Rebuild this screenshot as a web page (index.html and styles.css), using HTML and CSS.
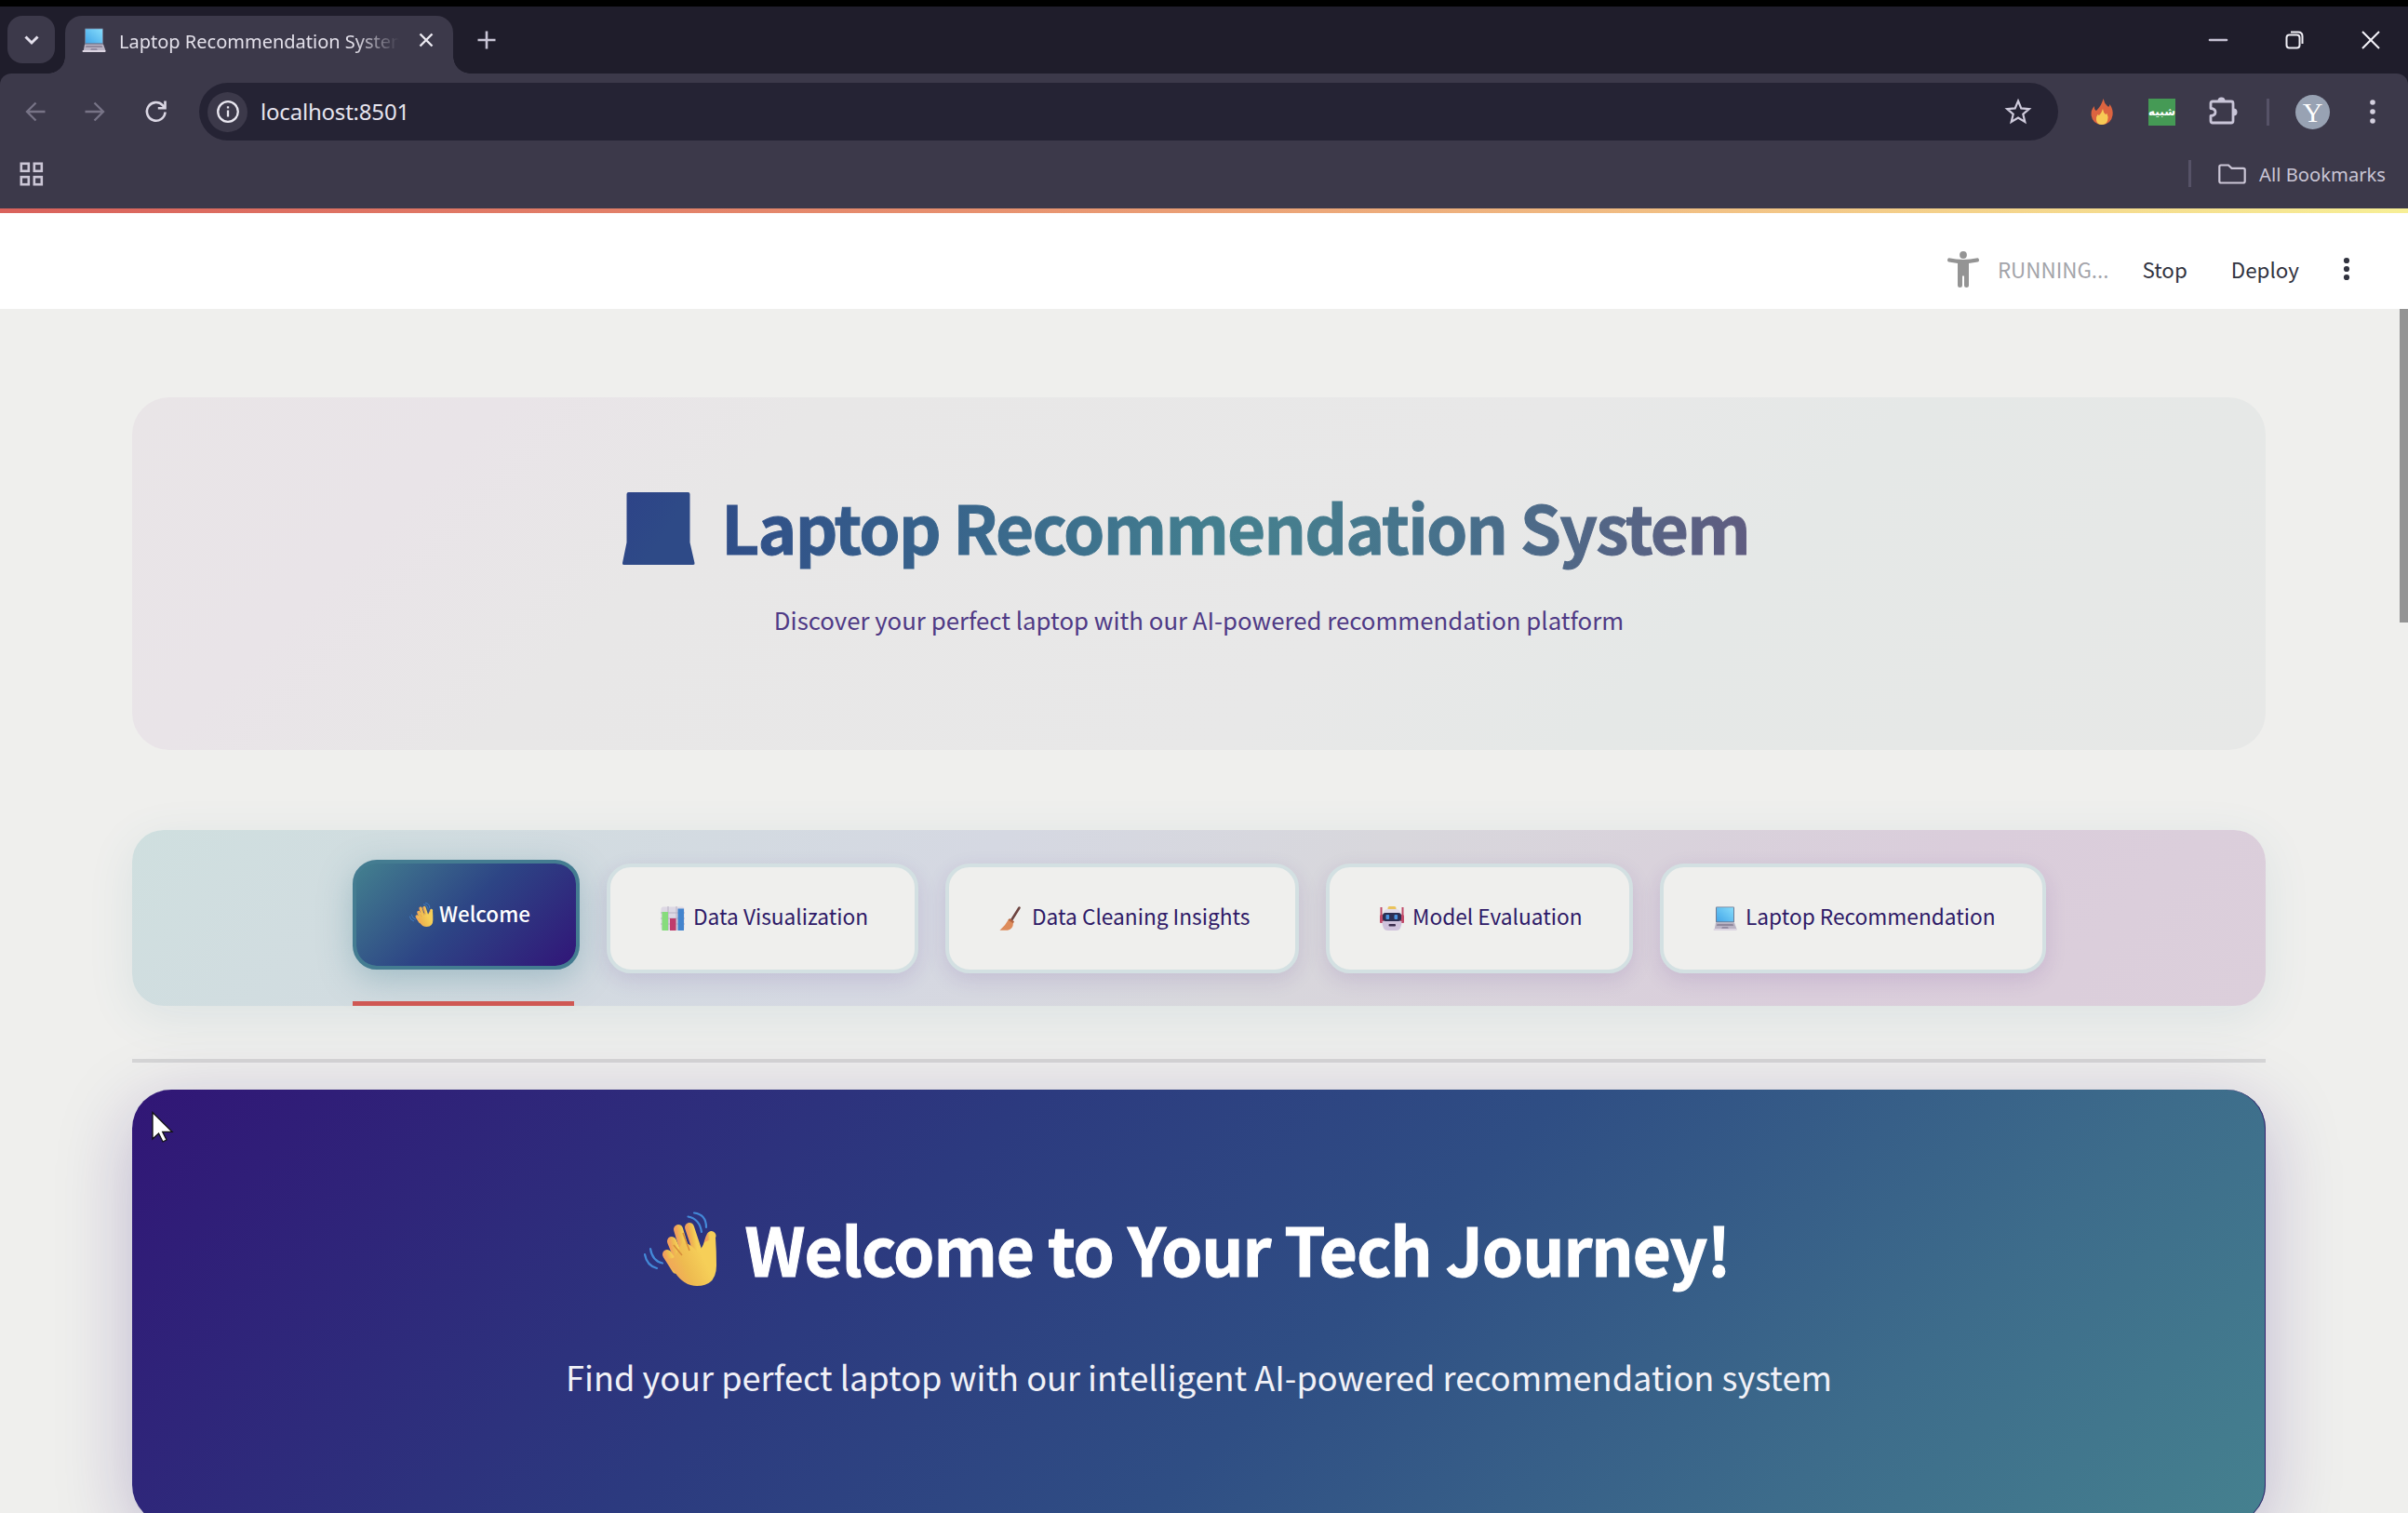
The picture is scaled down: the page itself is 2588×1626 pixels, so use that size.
FILE: index.html
```html
<!DOCTYPE html>
<html lang="en">
<head>
<meta charset="utf-8">
<title>Laptop Recommendation System</title>
<link rel="stylesheet" href="styles.css">
</head>
<body>
<svg class="defs" width="0" height="0" aria-hidden="true">
  <defs>
    <linearGradient id="screen" x1="0" y1="1" x2="1" y2="0"><stop offset="0" stop-color="#43a6e8"/><stop offset="1" stop-color="#86dcfb"/></linearGradient>
    <linearGradient id="skin" x1="0" y1="0.6" x2="0.7" y2="0.3"><stop offset="0" stop-color="#f2a05c"/><stop offset="0.5" stop-color="#eebb50"/><stop offset="1" stop-color="#f6cf58"/></linearGradient>
    <linearGradient id="titlefill" gradientUnits="userSpaceOnUse" x1="-10" y1="0" x2="50" y2="40"><stop offset="0" stop-color="#2d4288"/><stop offset="1" stop-color="#2e4a87"/></linearGradient>
    <symbol id="laptop" viewBox="0 0 26 26">
      <rect x="3" y="0.5" width="20" height="17" rx="1" fill="#6c7b96"/><rect x="4" y="1.3" width="18" height="15" fill="url(#screen)"/>
      <path d="M3 17.5h20l2.5 7q.2 1-1 1h-23q-1.200-1-1z" fill="#b9b3c4"/><path d="M4.500 19h17l.7 2h-18.400z" fill="#8f889c"/><path d="M10 22h6l.8 2h-7.600z" fill="#938ca3"/><path d="M.7 24h24.600v2h-24.600z" fill="#dcd5e2"/>
    </symbol>
    <symbol id="wave" viewBox="0 0 80 80">
      <g fill="none" stroke="#4389d8" stroke-width="2.200" stroke-linecap="round"><path d="M54 1.500Q67 3 67 17"/><path d="M47.500 5.500Q60 8 62 22"/><path d="M1 46Q3 58 14 61"/><path d="M7 40Q9 53 20 55.500"/></g>
      <g fill="none" stroke="url(#skin)" stroke-width="10" stroke-linecap="round"><path d="M49 17l9 27"/><path d="M37 19l9 30"/><path d="M30 32l9 22"/><path d="M25 46l10 16"/><path d="M72.500 26q-5 9-3 22"/></g>
      <path d="M21 49q6 3 12 0l9-17q8 3 14 10 4 3 9-9l12-5q1 14 1 30 0 22-21 22-14 0-24-15z" fill="url(#skin)"/>
      <path d="M42 23l7 19M32 36l9 11" fill="none" stroke="#d68c3a" stroke-width="1.500"/>
    </symbol>
  </defs>
</svg>

<div class="screen">
<div class="browser">
  <div class="tabstrip">
    <div class="tab-search"><svg width="18" height="12" viewBox="0 0 18 12"><path d="M2.500 2.500l6.500 6.500 6.500-6.500" fill="none" stroke="#e4e0ec" stroke-width="3"/></svg></div>
    <div class="tab">
      <svg width="26" height="26"><use href="#laptop"/></svg>
      <span class="tab-title">Laptop Recommendation System</span>
      <svg class="tab-close" width="18" height="18" viewBox="0 0 18 18"><path d="M2.500 2.500l13 13M15.500 2.500l-13 13" stroke="#eceaf2" stroke-width="2.400"/></svg>
    </div>
    <svg class="newtab" width="20" height="20" viewBox="0 0 20 20"><path d="M10 0.500v19M0.500 10h19" stroke="#c9c5d6" stroke-width="2.600"/></svg>
    <div class="window-buttons">
      <svg width="20" height="20" viewBox="0 0 20 20"><path d="M1 10h18" stroke="#c5c1d3" stroke-width="2.600" stroke-linecap="round"/></svg>
      <svg width="20" height="20" viewBox="0 0 20 20"><g fill="none" stroke="#eeedf4" stroke-width="2"><rect x="1.500" y="4.500" width="14" height="14" rx="3"/><path d="M6 1.500h8q4.500 0 4.500 4.500v8"/></g></svg>
      <svg width="20" height="20" viewBox="0 0 20 20"><path d="M1 1l18 18M19 1L1 19" stroke="#f3f2f8" stroke-width="2"/></svg>
    </div>
  </div>
  <div class="toolbar">
    <svg width="22" height="22" viewBox="0 0 22 22"><path d="M21.500 11H2M11.500 1.500L2 11l9.500 9.500" fill="none" stroke="#777386" stroke-width="2.300"/></svg>
    <svg width="22" height="22" viewBox="0 0 22 22"><path d="M.5 11H20M10.500 1.500L20 11l-9.500 9.500" fill="none" stroke="#777386" stroke-width="2.300"/></svg>
    <svg width="24" height="24" viewBox="0 0 24 24"><path d="M21.500 12.500a9.800 9.800 0 1 1-2.700-7.400l2 2.200" fill="none" stroke="#dbd7e4" stroke-width="2.600"/><path d="M22.800 0.500v9h-9v-2.600h6.400v-6.400z" fill="#dbd7e4"/></svg>
    <div class="omnibox">
      <div class="site-info"><svg width="24" height="24" viewBox="0 0 24 24"><circle cx="12" cy="12" r="10.800" fill="none" stroke="#e9e7f0" stroke-width="2.300"/><path d="M12 10.500v7M12 6.200v2.400" stroke="#e9e7f0" stroke-width="2.300"/></svg></div>
      <span class="url">localhost:8501</span>
      <svg class="star" width="28" height="28" viewBox="0 0 28 28"><path d="M14 2.500l3.300 7.900 8.500.7-6.500 5.600 2 8.300L14 20.600 6.700 25l2-8.300-6.500-5.600 8.500-.7z" fill="none" stroke="#cfcbdc" stroke-width="2.200"/></svg>
    </div>
    <svg class="fire" width="24" height="28" viewBox="0 0 24 28"><path d="M13.500 0q1 5 4.500 8 2 2 2.500-2 4 6 3 12-1.500 9.500-11.500 10Q2 27.500.6 18 0 12 4 8q-.5 4 2 5Q12 7 13.500 0z" fill="#dc6440"/><path d="M13 11q.5 4 3 6l1.500-1q2 4 .5 8-1.500 4-6 4-5.500 0-6-5-.2-4 1.500-6l1.500 1Q12 15 13 11z" fill="#f7ca55"/></svg>
    <div class="ext-green"><span>شبیه</span></div>
    <svg class="puzzle" width="31" height="30" viewBox="0 0 31 30"><path d="M4 4h20q2 0 2 2v19q0 2-2 2H4q-2 0-2-2v-5.500q5-.3 5-4Q7 12 2 11.500V6q0-2 2-2z" fill="none" stroke="#c9c5d8" stroke-width="2.800" stroke-linejoin="round"/><path d="M9.500 3.500a4 4 0 0 1 8 0zM26.500 11.500a4 4 0 0 1 0 8z" fill="#c9c5d8"/></svg>
    <div class="bar-sep"></div>
    <div class="avatar">Y</div>
    <svg class="dots" width="6" height="28" viewBox="0 0 6 28"><g fill="#d4d0df"><circle cx="3" cy="4" r="2.800"/><circle cx="3" cy="14" r="2.800"/><circle cx="3" cy="24" r="2.800"/></g></svg>
  </div>
  <div class="bookmarks">
    <svg width="26" height="26" viewBox="0 0 26 26"><g fill="none" stroke="#cbc6d6" stroke-width="2.600"><rect x="1.800" y="1.800" width="8" height="8"/><rect x="15.800" y="1.800" width="8" height="8"/><rect x="1.800" y="16.200" width="8" height="8"/><rect x="15.800" y="16.200" width="8" height="8"/></g></svg>
    <div class="bar-sep push"></div>
    <svg class="folder" width="30" height="22" viewBox="0 0 30 22"><path d="M3 1.500h8l3.500 3.300H27q1.700 0 1.700 1.700v12.300q0 1.700-1.700 1.700H3q-1.700 0-1.700-1.700V3.200Q1.300 1.500 3 1.500z" fill="none" stroke="#cbc6d6" stroke-width="2.200"/></svg>
    <span class="all-bookmarks">All Bookmarks</span>
  </div>
</div>

<div class="decoration"></div>
<header class="app-header">
  <svg class="runner" width="34" height="39" viewBox="0 0 34 39"><g fill="#949494"><circle cx="17" cy="4" r="3.900"/><path d="M1.500 7.300Q0 7.500 0 9.500t1.500 2l9.500 1.500v24q0 2 2.500 2t2.500-2V26.500h2V37q0 2 2.500 2t2.500-2V13l9.500-1.500q1.500 0 1.500-2t-1.500-2.200Q17 10.700 1.500 7.300z"/></g></svg>
  <span class="running">RUNNING...</span>
  <span class="stop">Stop</span>
  <span class="deploy">Deploy</span>
  <svg class="menu" width="8" height="26" viewBox="0 0 8 26"><g fill="#31333f"><circle cx="4" cy="4" r="3.100"/><circle cx="4" cy="13" r="3.100"/><circle cx="4" cy="22" r="3.100"/></g></svg>
</header>

<main class="app">
  <section class="banner">
    <h1><svg width="80" height="80" viewBox="0 0 80 80"><path d="M7.500 1h64q2 0 2 2v52l5 22q.5 2-1.500 2H2.500Q.5 79 1 77l4.500-22V3q0-2 2-2z" fill="url(#titlefill)"/></svg><span class="banner-title">Laptop Recommendation System</span></h1>
    <p>Discover your perfect laptop with our AI-powered recommendation platform</p>
  </section>

  <nav class="tabs">
    <div class="pill active"><svg width="26" height="26"><use href="#wave"/></svg><span>Welcome</span></div>
    <div class="pill vis"><svg width="26" height="26" viewBox="0 0 26 26"><rect x="0.500" y="0.500" width="25" height="25" rx="2.500" fill="#ddd8e4"/><path d="M0 7h26M0 13h26M0 19h26M8 0v26M17 0v26" stroke="#b9b2c4" stroke-width="1"/><rect x="1.500" y="6" width="6.500" height="20" fill="#86dc7c"/><rect x="10" y="13" width="6.500" height="13" fill="#bf3c6c"/><rect x="18.500" y="2.500" width="6.500" height="23.500" fill="#4384cd"/></svg><span>Data Visualization</span></div>
    <div class="pill clean"><svg width="26" height="26" viewBox="0 0 26 26"><path d="M21.500 1.500L13 15" stroke="#6d4440" stroke-width="2.600" stroke-linecap="round"/><path d="M10 14l5 3.500q0 7-6 8.200H.5Q7 20 10 14z" fill="#dd8b5a"/><path d="M11 13l5 3.200-1 2-5.500-3.500z" fill="#b46440"/></svg><span>Data Cleaning Insights</span></div>
    <div class="pill model"><svg width="26" height="26" viewBox="0 0 26 26"><path d="M1.500 1v17M24.500 1v17" stroke="#c04a68" stroke-width="2"/><rect x="0" y="9" width="4" height="9" rx="1.500" fill="#c04a68"/><rect x="22" y="9" width="4" height="9" rx="1.500" fill="#c04a68"/><rect x="8.500" y="0" width="9" height="5" rx="2" fill="#eac35c"/><path d="M4 7q0-4 5-4h8q5 0 5 4v9H4z" fill="#e2dbea"/><path d="M2.500 16h21q0 10-6 10h-9q-6 0-6-10z" fill="#cfc2dc"/><rect x="3" y="7" width="20" height="9" rx="3" fill="#2c2e52"/><rect x="6.500" y="9" width="3.600" height="5" rx="1" fill="#4b92de"/><rect x="15.500" y="9" width="3.600" height="5" rx="1" fill="#4b92de"/><rect x="9.500" y="19" width="7.500" height="2.600" rx="1" fill="#3b2d4e"/></svg><span>Model Evaluation</span></div>
    <div class="pill rec"><svg width="26" height="26"><use href="#laptop"/></svg><span>Laptop Recommendation</span></div>
    <div class="underline"></div>
  </nav>

  <div class="rule"></div>

  <section class="hero">
    <h2><svg width="80" height="80"><use href="#wave"/></svg><span class="hero-title">Welcome to Your Tech Journey!</span></h2>
    <p>Find your perfect laptop with our intelligent AI-powered recommendation system</p>
  </section>
</main>
<div class="scrollbar"></div>
<svg class="cursor" width="26" height="36" viewBox="0 0 26 36"><path d="M2 1.500V30l6.500-6 4.500 9 4-2-4.300-8.600H23z" fill="#fff" stroke="#111" stroke-width="1.300"/></svg>
</div>
</body>
</html>
```
FILE: styles.css
```css
* { box-sizing: border-box; }
body { margin: 0; font-family: "Noto Sans CJK SC", sans-serif; background: #efefed; }
svg { display: block; flex: none; overflow: visible; }
span { white-space: nowrap; }
.defs { position: absolute; }
.screen { position: relative; width: 2588px; height: 1626px; overflow: hidden; background: #efefed; }

/* Browser window */
.browser { background: #1f1d2b; border-top: 7px solid #000; height: 224px; font-family: "Noto Sans", sans-serif; }
.tabstrip { display: flex; height: 72px; padding: 10px 0 0 8px; }
.tab-search { width: 51px; height: 51px; border-radius: 16px; background: #3c394a; display: grid; place-items: center; }
.tab { position: relative; width: 417px; height: 62px; margin-left: 11px; padding: 0 20px 10px 18px; border-radius: 18px 18px 0 0; background: #3c394a; display: flex; align-items: center; }
.tab::before, .tab::after { content: ""; position: absolute; bottom: 0; width: 18px; height: 18px; }
.tab::before { left: -18px; background: radial-gradient(circle at 0 0, transparent 17.5px, #3c394a 18px); }
.tab::after { right: -18px; background: radial-gradient(circle at 100% 0, transparent 17.5px, #3c394a 18px); }
.tab-title { width: 304px; margin-left: 14px; padding-top: 2px; overflow: hidden; font-size: 20px; color: #e3e0ea; -webkit-mask-image: linear-gradient(90deg, #000 84%, transparent 100%); mask-image: linear-gradient(90deg, #000 84%, transparent 100%); }
.tab-close { margin-left: 20px; }
.newtab { margin: 16px 0 0 26px; }
.window-buttons { margin: 16px 30px 0 auto; display: flex; gap: 62px; }

.toolbar { height: 82px; padding: 0 34px 0 27px; background: #3c394a; border-radius: 12px 12px 0 0; display: flex; align-items: center; }
.toolbar > svg:nth-child(2) { margin-left: 42px; }
.toolbar > svg:nth-child(3) { margin-left: 43px; }
.omnibox { width: 1998px; height: 62px; margin-left: 34px; padding: 0 29px 0 9px; border-radius: 31px; background: #252334; display: flex; align-items: center; }
.site-info { width: 43px; height: 43px; border-radius: 50%; background: #3c394a; display: grid; place-items: center; }
.url { margin-left: 14px; padding-bottom: 1px; font-size: 24px; letter-spacing: -.2px; color: #e6e4ee; }
.star { margin-left: auto; }
.fire { margin-left: 35px; }
.ext-green { width: 29px; height: 29px; margin-left: 38px; background: #459a55; color: #fff; font: 700 12px/24px "DejaVu Sans", sans-serif; display: grid; place-items: center; }
.puzzle { margin-left: 36px; }
.bar-sep { width: 3px; height: 29px; background: #565267; }
.toolbar .bar-sep { margin-left: 31px; }
.avatar { width: 37px; height: 37px; margin-left: 28px; border-radius: 50%; background: #98a2b3; color: #fff; font: 30px/37px "Liberation Serif", serif; text-align: center; }
.dots { margin-left: 43px; }
.bookmarks { height: 63px; padding: 0 24px 12px 21px; background: #3c394a; display: flex; align-items: center; }
.push { margin-left: auto; }
.folder { margin-left: 29px; }
.all-bookmarks { margin-left: 14px; font-size: 20.2px; color: #c9c5d5; }

/* App header */
.decoration { height: 5px; background: linear-gradient(90deg, #d9625c, #e7906f 40%, #f3c888 75%, #f7ef96); }
.app-header { height: 103px; padding-top: 16px; padding-right: 62px; background: #fff; display: flex; align-items: center; justify-content: flex-end; font-size: 22.4px; color: #31333f; }
.runner { margin-top: 1px; }
.running { margin-left: 20px; color: #a3a4aa; }
.stop { margin-left: 36px; }
.deploy { margin-left: 47px; }
.menu { margin-left: 47px; }

/* Page */
.app { padding: 95px 153px 0 142px; }
.banner { height: 379px; border-radius: 40px; background: linear-gradient(135deg, #e9e5e7, #e9e4e8 15%, #e8e7e7 28%, #e8e8e8 58%, #e5e8e7 72%, #e7e8e7); display: flex; flex-direction: column; align-items: center; padding-top: 101px; }
h1, h2, p { margin: 0; }
h1, h2 { display: flex; font-weight: 700; font-size: 71px; line-height: 74px; height: 80px; }
h1 { margin-right: 29px; }
.banner-title { height: 90px; margin-left: 27px; letter-spacing: -1.78px; color: transparent; -webkit-text-stroke: 1px transparent; background: linear-gradient(95deg, #2f4d88, #437f8f 48%, #467e8e 55%, #476f8b 72%, #605c80); -webkit-background-clip: text; background-clip: text; }
.banner p { margin-top: 38px; font-size: 25.8px; line-height: 40px; color: #4f3a86; }

.tabs { position: relative; height: 189px; margin-top: 86px; padding: 36px 0 0 237px; border-radius: 34px; background: linear-gradient(135deg, #cfdfdf, #d5d8e2 38%, #d8d7dc 55%, #dacddb 80%, #dccfdb); box-shadow: 0 12px 50px rgba(68,129,145,.11); display: flex; gap: 29px; font-size: 22.7px; color: #2e1a67; }
.pill { height: 118px; display: flex; align-items: center; gap: 9px; border: 4px solid #d3e0e2; border-radius: 26px; background: #efefed; box-shadow: 0 7px 22px rgba(75,30,130,.13); padding-left: 54px; }
.pill span { margin-top: -5px; }
.active { width: 244px; margin-top: -4px; padding-left: 57px; gap: 6px; color: #fff; border-color: #447c91; background: linear-gradient(135deg, #43808f, #2d4585 48%, #311578) padding-box, #447c91 border-box; box-shadow: 0 10px 36px rgba(68,129,145,.35); font-weight: 500; font-size: 22.4px; }
.vis { width: 335px; }
.clean { width: 380px; }
.model { width: 330px; }
.rec { width: 415px; padding-left: 53px; }
.underline { position: absolute; left: 237px; bottom: 0; width: 238px; height: 5px; background: #cf5854; }
.rule { height: 4px; margin-top: 57px; background: #d6d6d6; }

.hero { height: 467px; margin-top: 29px; padding-top: 131px; border-radius: 42px; background: linear-gradient(135deg, #311676, #2c3a7f 35%, #2f4e84 56%, #3d6c8b 80%, #45818f); box-shadow: 0 20px 80px rgba(49,21,120,.25), inset -1px 0 0 #35256f; color: #fff; display: flex; flex-direction: column; align-items: center; }
h2 { margin-right: 26px; line-height: 78px; }
.hero-title { margin-left: 29px; letter-spacing: -1.08px; -webkit-text-stroke: 1px #fff; }
.hero p { margin-top: 72px; font-size: 36.15px; line-height: 50px; color: #f1f1f7; }

.scrollbar { position: absolute; right: 0; top: 332px; width: 9px; height: 337px; background: #949494; }
.cursor { position: absolute; left: 162px; top: 1194px; }
```
